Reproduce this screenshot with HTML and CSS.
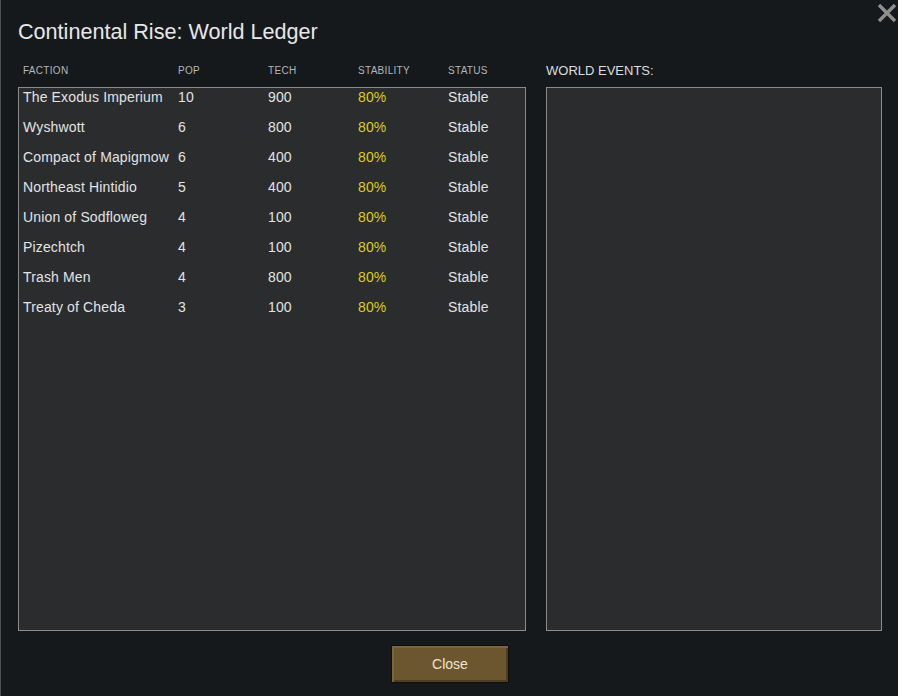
FILE: index.html
```html
<!DOCTYPE html>
<html>
<head>
<meta charset="utf-8">
<link rel="stylesheet" href="styles.css">
</head>
<body>
<div class="window">
  <button class="close-x" aria-label="Close">
    <svg width="20" height="20" viewBox="0 0 20 20"><path d="M2 2 L18 18 M18 2 L2 18" stroke="#8e8e8e" stroke-width="3.4" stroke-linecap="butt"/></svg>
  </button>
  <h1 class="title">Continental Rise: World Ledger</h1>
  <div class="content">
    <div class="ledger">
      <div class="cols head">
        <span>FACTION</span><span>POP</span><span>TECH</span><span>STABILITY</span><span>STATUS</span>
      </div>
      <div class="box">
        <div class="cols row"><span>The Exodus Imperium</span><span>10</span><span>900</span><span class="stab">80%</span><span>Stable</span></div>
        <div class="cols row"><span>Wyshwott</span><span>6</span><span>800</span><span class="stab">80%</span><span>Stable</span></div>
        <div class="cols row"><span>Compact of Mapigmow</span><span>6</span><span>400</span><span class="stab">80%</span><span>Stable</span></div>
        <div class="cols row"><span>Northeast Hintidio</span><span>5</span><span>400</span><span class="stab">80%</span><span>Stable</span></div>
        <div class="cols row"><span>Union of Sodfloweg</span><span>4</span><span>100</span><span class="stab">80%</span><span>Stable</span></div>
        <div class="cols row"><span>Pizechtch</span><span>4</span><span>100</span><span class="stab">80%</span><span>Stable</span></div>
        <div class="cols row"><span>Trash Men</span><span>4</span><span>800</span><span class="stab">80%</span><span>Stable</span></div>
        <div class="cols row"><span>Treaty of Cheda</span><span>3</span><span>100</span><span class="stab">80%</span><span>Stable</span></div>
      </div>
    </div>
    <div class="events">
      <div class="events-head">WORLD EVENTS:</div>
      <div class="box"></div>
    </div>
  </div>
  <div class="footer">
    <button class="btn">Close</button>
  </div>
</div>
</body>
</html>
```
FILE: styles.css
```css
html, body {
  margin: 0;
  padding: 0;
  background: #16191c;
}
body {
  width: 898px;
  height: 696px;
  overflow: hidden;
  font-family: "Liberation Sans", Arial, sans-serif;
}
.window {
  position: relative;
  box-sizing: border-box;
  width: 898px;
  height: 696px;
  border-left: 1px solid #4c5156;
  padding: 20px 0 0 17px;
  background: #16191c;
}
.close-x {
  position: absolute;
  top: 3px;
  left: 876px;
  width: 20px;
  height: 20px;
  padding: 0;
  border: 0;
  background: none;
}
.close-x svg { display: block; }
.title {
  margin: 0 0 18px 0;
  font-size: 21.6px;
  line-height: 24px;
  font-weight: normal;
  color: #e6e7e8;
}
.content {
  display: flex;
  gap: 20px;
}
.ledger { width: 508px; }
.events { width: 336px; }
.box {
  box-sizing: border-box;
  height: 544px;
  background: #2a2c2d;
  border: 1px solid #8a8b8c;
}
.cols {
  display: grid;
  grid-template-columns: 155px 90px 90px 90px 1fr;
  padding-left: 5px;
}
.head {
  height: 16px;
  line-height: 18px;
  margin-bottom: 9px;
  font-size: 10px;
  letter-spacing: 0.3px;
  color: #b4b6b8;
}
.ledger .box .cols { padding-left: 4px; }
.row {
  height: 30px;
  font-size: 14px;
  letter-spacing: 0.15px;
  line-height: 18px;
  color: #e2e3e4;
  white-space: nowrap;
}
.stab { color: #ddcb1c; }
.events-head {
  height: 16px;
  line-height: 18px;
  margin-bottom: 9px;
  font-size: 13px;
  color: #dcdddf;
}
.footer {
  display: flex;
  justify-content: center;
  padding-right: 16px;
  margin-top: 14px;
}
.btn {
  box-sizing: border-box;
  width: 118px;
  height: 38px;
  padding: 0;
  font-family: "Liberation Sans", Arial, sans-serif;
  font-size: 14px;
  color: #ece4d2;
  background: #6c5630;
  border: 1px solid #0f0f0f;
  box-shadow: inset 2px 2px 0 #7c6639, inset -2px -2px 0 #4f3e21;
}
```
